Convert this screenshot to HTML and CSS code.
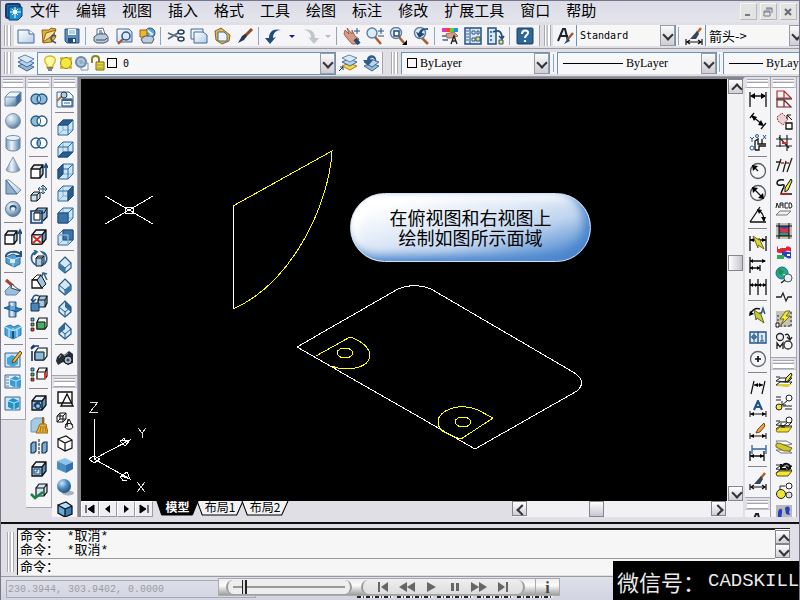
FILE: index.html
```html
<!DOCTYPE html>
<html lang="zh-CN">
<head>
<meta charset="utf-8">
<title>CAD</title>
<link rel="stylesheet" href="styles.css">
</head>
<body>
<svg class="sprite" aria-hidden="true">
  <defs>
    <linearGradient id="gb" x1="0" y1="0" x2="1" y2="1"><stop offset="0" stop-color="#f1f7fc"/><stop offset=".5" stop-color="#a9c6de"/><stop offset="1" stop-color="#486f98"/></linearGradient>
    <linearGradient id="gp" x1="0" y1="0" x2="1" y2="1"><stop offset="0" stop-color="#fff"/><stop offset="1" stop-color="#b3cde4"/></linearGradient>
    <linearGradient id="gh"><stop offset="0" stop-color="#7199bd"/><stop offset=".4" stop-color="#eef6fc"/><stop offset="1" stop-color="#557ea6"/></linearGradient>
    <radialGradient id="gs" cx=".35" cy=".3" r=".75"><stop offset="0" stop-color="#f2f8fd"/><stop offset=".5" stop-color="#a7c2d8"/><stop offset="1" stop-color="#4f7398"/></radialGradient>
    <radialGradient id="gd" cx=".35" cy=".3" r=".75"><stop offset="0" stop-color="#cfe6f8"/><stop offset=".5" stop-color="#4f8cc0"/><stop offset="1" stop-color="#1d4b7c"/></radialGradient>
  </defs>
  <symbol id="app" viewBox="0 0 18 18"><rect x="1" y="1" width="14" height="14" rx="2" fill="#0d6fbc" stroke="#1f3864" stroke-width="2"/><path d="M4 4h13v9l-4 4H4z" fill="#1592d8" stroke="#16365c"/><path d="M10 4v11M5 9h11M7 6l6 6M13 6l-6 6" stroke="#fff" stroke-width="1"/><rect x="8" y="7" width="4" height="4" fill="#fff"/></symbol>
  <symbol id="new" viewBox="0 0 18 18"><path d="M1 3h11l5 4v9H1z" fill="url(#gp)" stroke="#41699a"/><path d="M12 3v4h5" fill="#fff" stroke="#41699a"/></symbol>
  <symbol id="open" viewBox="0 0 18 18"><path d="M2 3h7l2-2 5 1-2 5 2 3-4 5-9 1z" fill="#e2b13a" stroke="#8d6719"/><path d="M3 15L6 6l10-3-4 6z" fill="#f8e29a" stroke="#8d6719"/><path d="M16 9c-4-2-6 1-4 5l4 2" fill="none" stroke="#3d526e" stroke-width="1.6"/></symbol>
  <symbol id="save" viewBox="0 0 18 18"><path d="M2 2h14v14H4l-2-2z" fill="#5c8dbd" stroke="#2e5787"/><path d="M5 2h8v6H5z" fill="#eef6fc"/><path d="M6 4h6M6 6h6" stroke="#7caace"/><path d="M5 11h8v5H5z" fill="#24486f"/><path d="M10 12h2v3h-2z" fill="#fff"/></symbol>
  <symbol id="print" viewBox="0 0 18 18"><path d="M5 8V2l6-1 2 6" fill="#fff" stroke="#5b6f88"/><path d="M2 10l4-3h8l2 3v4l-4 2H5l-3-2z" fill="#bac8d7" stroke="#445a76"/><path d="M4 13h9l2-2M7 4h3M7 6h4" stroke="#3c506b" fill="none"/></symbol>
  <symbol id="preview" viewBox="0 0 18 18"><path d="M2 2h12l3 3v10H2z" fill="url(#gp)" stroke="#41699a"/><path d="M9 11l-6 6" stroke="#ad4b26" stroke-width="2"/><circle cx="11" cy="9" r="4" fill="#d5ebf9" stroke="#34567d" stroke-width="1.5"/></symbol>
  <symbol id="publish" viewBox="0 0 18 18"><circle cx="12" cy="6" r="5" fill="#5ba4d6" stroke="#2c567f"/><path d="M9 3l5 4-3 3" stroke="#def0f9" fill="none" stroke-width="2"/><path d="M2 3h7v7H2z" fill="#f0b62a" stroke="#946211"/><path d="M3 12l4-3h7l2 3-2 4H5z" fill="#bfcbda" stroke="#455a75"/></symbol>
  <symbol id="cut" viewBox="0 0 18 18"><path d="M1 6l10 4M1 12l10-6" stroke="#53667c" stroke-width="1.7"/><ellipse cx="14" cy="5" rx="3" ry="2" fill="none" stroke="#223e60" stroke-width="1.5"/><ellipse cx="14" cy="12" rx="3" ry="2" fill="none" stroke="#223e60" stroke-width="1.5"/></symbol>
  <symbol id="copy" viewBox="0 0 18 18"><path d="M1 2h12v10H1z" fill="#edf5fb" stroke="#41699a"/><path d="M4 5h9l4 3v8H4z" fill="url(#gp)" stroke="#41699a"/></symbol>
  <symbol id="paste" viewBox="0 0 18 18"><path d="M2 4l6-3 9 7-1 6-7 3-6-4z" fill="#e3b64e" stroke="#86621c"/><path d="M5 5h6l3 3v6H5z" fill="#edf5fb" stroke="#41699a"/></symbol>
  <symbol id="brush" viewBox="0 0 18 18"><path d="M16 2l-7 7" stroke="#8c4c24" stroke-width="3"/><path d="M9 7l2 2-3 4-6 3 4-7z" fill="#29384c"/></symbol>
  <symbol id="undo" viewBox="0 0 18 18"><path d="M4 11C4 4 9 1 16 3c-5 0-8 3-8 8l3-1-6 7-5-6z" fill="#204b7c"/></symbol>
  <symbol id="redo" viewBox="0 0 18 18"><path d="M14 11C14 4 9 1 2 3c5 0 8 3 8 8l-3-1 6 7 5-6z" fill="#c1c6ca"/></symbol>
  <symbol id="pan" viewBox="0 0 18 18"><path d="M2 3l4 4-2-6 5 6V3l3 6 4 3-3 5H9L3 10 1 7z" fill="#d99a83" stroke="#844e42" stroke-width=".8"/><path d="M12 12l4 5" stroke="#214a78" stroke-width="4"/><path d="M14 1v6M11 4h6" stroke="#28507f"/></symbol>
  <symbol id="zoomrt" viewBox="0 0 18 18"><path d="M9 10l6 7" stroke="#ad5a2d" stroke-width="2.5"/><circle cx="6" cy="6" r="5" fill="#d9edf8" stroke="#617e9c" stroke-width="1.4"/><path d="M15 1v6M12 4h6M12 9h6" stroke="#28507f"/></symbol>
  <symbol id="zoomwin" viewBox="0 0 18 18"><path d="M10 10l5 6" stroke="#ad5a2d" stroke-width="2.5"/><circle cx="7" cy="6" r="5.5" fill="#d9edf8" stroke="#617e9c" stroke-width="1.4"/><path d="M5 4h5v5H5z" fill="#fff" stroke="#234971" stroke-width="1.5"/><path d="M18 13v5h-5z"/></symbol>
  <symbol id="zoomprev" viewBox="0 0 18 18"><path d="M9 10l7 7" stroke="#ad5a2d" stroke-width="2.5"/><circle cx="8" cy="6" r="5.5" fill="#d9edf8" stroke="#617e9c" stroke-width="1.4"/><path d="M16 1C9 1 7 4 7 6L4 5l3 6 6-4-3-1c0-2 2-4 6-3z" fill="#214b7a"/></symbol>
  <symbol id="props" viewBox="0 0 18 18"><path d="M1 1h4v4H1z" fill="#ed2ec7"/><path d="M5 1h4v4H5z" fill="#f54527"/><path d="M9 1h4v4H9z" fill="#49dc3a"/><path d="M13 1h4v4h-4z" fill="#278be9"/><path d="M5 7l8-2 4 4-6 2-5 0z" fill="#df9d83" stroke="#7a4638" stroke-width=".7"/><path d="M1 8h5v2H1zM1 12h6v2H2z" fill="#70889b"/><path d="M10 17l3-8 3 8M11 14h4" stroke="#222" fill="none" stroke-width="1.4"/></symbol>
  <symbol id="dc" viewBox="0 0 18 18"><path d="M1 1h16v16H1z" fill="#d7e8f5" stroke="#245080" stroke-width="1.5"/><path d="M6 1v16" stroke="#245080"/><path d="M2 4h3M2 7h3M2 10h3M2 13h3" stroke="#3c6a98"/><path d="M8 4h3v3H8zM13 4h2v3h-2zM8 11h3v3H8z" fill="#fff" stroke="#245080"/><path d="M12 10h4v4h-4z" fill="#f2df54" stroke="#245080"/></symbol>
  <symbol id="tp" viewBox="0 0 18 18"><path d="M1 1h8v16H1z" fill="#d7e8f5" stroke="#245080" stroke-width="1.5"/><path d="M3 4h2v2H3zM3 8h2v2H3zM3 12h2v2H3z" fill="#4b7aa6"/><path d="M6 5c7-3 9 1 9 6M12 9l3 3 2-3" fill="none" stroke="#245080" stroke-width="1.7"/><path d="M12 13h4v4h-4z" fill="#f2df54" stroke="#245080"/></symbol>
  <symbol id="help" viewBox="0 0 18 18"><rect x="1" y="1" width="16" height="16" rx="1" fill="#2d6899" stroke="#173b63"/><path d="M6 7c0-5 7-4 6-1 0 2-3 2-3 5M9 13v2" fill="none" stroke="#fff" stroke-width="2"/></symbol>
  <symbol id="tstyle" viewBox="0 0 18 18"><path d="M2 14L7 2h2l3 12M4 9h8" fill="none" stroke="#192330" stroke-width="2"/><path d="M17 6l-6 7" stroke="#9b6035" stroke-width="2.5"/><path d="M12 11l-4 6 6-3z" fill="#204b7c"/></symbol>
  <symbol id="dstyle" viewBox="0 0 18 18"><path d="M1 12v6M17 12v6M2 15h14M5 13l-3 2 3 2M13 13l3 2-3 2" fill="none" stroke="#111" stroke-width="1.2"/><path d="M16 1l-4 5" stroke="#a86530" stroke-width="2.5"/><path d="M12 4L5 12h6l3-5z" fill="#344659"/></symbol>
  <symbol id="layers" viewBox="0 0 18 18"><path d="M1 12l7-3 9 4-7 4z" fill="#92b8d7" stroke="#3f6995"/><path d="M1 8l7-3 9 4-7 4z" fill="#b9d4e9" stroke="#3f6995"/><path d="M1 4l7-3 9 4-7 4z" fill="#d9e9f5" stroke="#5f87ad"/></symbol>
  <symbol id="laycur" viewBox="0 0 18 18"><path d="M3 12l7-3 8 3-7 4z" fill="#f4d742" stroke="#a98216"/><path d="M3 8l7-3 8 3-7 4z" fill="#b9d4e9" stroke="#3f6995"/><path d="M3 4l7-3 8 3-7 4z" fill="#d9e9f5" stroke="#5f87ad"/><path d="M0 17l4-4M1 13h3v3" stroke="#1c3c63" fill="none"/></symbol>
  <symbol id="layprev" viewBox="0 0 18 18"><path d="M2 12l7-3 8 3-7 5z" fill="#92b8d7" stroke="#3f6995"/><path d="M2 8l7-3 8 3-7 5z" fill="#b9d4e9" stroke="#3f6995"/><path d="M14 8c2-8-9-9-9-2H1l5 6 5-6H8c0-4 5-2 6 2z" fill="#2c5b8c"/></symbol>
  <symbol id="bulb" viewBox="0 0 14 16"><path d="M4 10C-1 4 3 1 7 1s8 3 3 9v2H4z" fill="#fff9a3" stroke="#d8bd25" stroke-width="1.4"/><path d="M4 13h6M5 15h4" stroke="#54616d" stroke-width="1.5"/></symbol>
  <symbol id="sun" viewBox="0 0 14 16"><path d="M1 2h3v3H1zM10 2h3v3h-3zM1 11h3v3H1zM10 11h3v3h-3z" fill="#e8bb24"/><circle cx="7" cy="8" r="5.5" fill="#f7e73d" stroke="#8e8130"/></symbol>
  <symbol id="vpsun" viewBox="0 0 14 16"><circle cx="6" cy="7" r="5" fill="#b4c7d6" stroke="#688cab" stroke-width="2"/><circle cx="6" cy="7" r="2" fill="#95acbf"/><path d="M8 8h5v7H6v-3" fill="none" stroke="#7f9bb6"/></symbol>
  <symbol id="lock" viewBox="0 0 14 16"><path d="M1 8V4c0-4 7-4 7 0v4" fill="none" stroke="#8e8126" stroke-width="2"/><path d="M5 7h8v8H5z" fill="#e9d93b" stroke="#786d1b"/><path d="M6 10h6M6 13h6" stroke="#9f902a"/></symbol>

  <symbol id="box" viewBox="0 0 18 18"><path d="M1 7l5-5h11l-5 5z" fill="#edf5fb"/><path d="M1 7h11v9H1z" fill="url(#gb)"/><path d="M12 7l5-5v9l-5 5z" fill="#446c98"/><path d="M1 7l5-5h11v9l-5 5H1zh11v9M12 7l5-5" fill="none" stroke="#6d89a5"/></symbol>
  <symbol id="sphere" viewBox="0 0 18 18"><circle cx="9" cy="9" r="7.5" fill="url(#gs)" stroke="#8298ad"/></symbol>
  <symbol id="cyl" viewBox="0 0 18 18"><path d="M2 4v10c2 4 12 4 14 0V4z" fill="url(#gh)" stroke="#66839f"/><ellipse cx="9" cy="4" rx="7" ry="2.5" fill="#e6f1f9" stroke="#7892ab"/></symbol>
  <symbol id="cone" viewBox="0 0 18 18"><path d="M9 1L2 14c2 3 12 3 14 0z" fill="url(#gh)" stroke="#8798aa"/></symbol>
  <symbol id="wedge" viewBox="0 0 18 18"><path d="M2 2h3l12 10-4 4z" fill="url(#gp)" stroke="#7891aa"/><path d="M2 2v14h11z" fill="#8fb0cd" stroke="#486d93"/></symbol>
  <symbol id="torus" viewBox="0 0 18 18"><circle cx="9" cy="9" r="7.5" fill="url(#gs)" stroke="#637c96"/><ellipse cx="9" cy="8" rx="3.5" ry="3" fill="#294e78"/><ellipse cx="9" cy="9" rx="2.5" ry="2" fill="#e3ebf2"/></symbol>
  <symbol id="extrude" viewBox="0 0 18 18"><path d="M1 7h9v9H1z" fill="#fff"/><path d="M1 7l3-4h9l-3 4z" fill="#dcecf7"/><path d="M10 7l3-4v9l-3 4z" fill="#9fc5e0"/><path d="M1 7l3-4h9v9l-3 4H1V7h9v9M10 7l3-4" fill="none" stroke="#111" stroke-width="1.3"/><path d="M16 16V3M14 6l2-4 2 4" fill="none" stroke="#204d7e" stroke-width="1.6"/></symbol>
  <symbol id="revolve" viewBox="0 0 18 18"><path d="M2 7l7-3 7 3v7l-6 3-8-4z" fill="#549ed5" stroke="#2b6399"/><path d="M2 7l7 3 7-3M9 10v7" stroke="#b9e2f5" fill="none"/><path d="M2 7C1 1 14 0 17 5M17 1v5h-5" fill="none" stroke="#29527c" stroke-width="2"/><path d="M6 9h5v4H6z" fill="#d8edf7"/></symbol>
  <symbol id="slice" viewBox="0 0 18 18"><path d="M1 13l5-5 11 4-5 5H2z" fill="#9ac0dd" stroke="#6684a1"/><path d="M2 2l7 6" stroke="#a3442f" stroke-width="3"/><path d="M8 6l8 7-9-3z" fill="#eef1f4" stroke="#3d4650"/></symbol>
  <symbol id="section" viewBox="0 0 18 18"><path d="M5 2h7v15H5z" fill="url(#gh)" stroke="#335f8b"/><path d="M0 8l6-2 12 3-5 3z" fill="#2879c0" stroke="#18558d"/><path d="M6 6h5v4H6z" fill="#68a8d9"/></symbol>
  <symbol id="interf" viewBox="0 0 18 18"><path d="M1 5l5-2 4 2 4-2 3 2v8l-8 4-8-4z" fill="#4aa3df" stroke="#2c78b0"/><path d="M5 7v8M9 6v10M13 7v8M1 5l8 4 8-4" stroke="#b9e3f7" fill="none" stroke-width="1.3"/><path d="M9 9v7" stroke="#174f87" stroke-width="2"/></symbol>
  <symbol id="sketchedit" viewBox="0 0 18 18"><path d="M1 3h15v14H1z" fill="#c9e3f4" stroke="#376994"/><path d="M3 8l5-3 6 3v6l-5 3-6-3z" fill="#45a5d5"/><path d="M16 1l-7 9-1 3 3-1 7-9z" fill="#ecb945" stroke="#6b4718"/></symbol>
  <symbol id="setup" viewBox="0 0 18 18"><path d="M1 3h15v13H1z" fill="#e1eff8" stroke="#376994"/><path d="M2 5h3M2 8h3M2 11h3M2 14h3" stroke="#5683ab"/><path d="M6 7l5-3 6 3v7l-5 2-6-3z" fill="#3e9bd1"/><path d="M6 7l6 2 5-2M12 9v7" stroke="#ade4f6" fill="none"/></symbol>
  <symbol id="setprof" viewBox="0 0 18 18"><path d="M1 3h15v13H1z" fill="#c9e3f4" stroke="#376994"/><path d="M4 7l5-3 6 3v6l-5 3-6-3z" fill="#2592c5"/><path d="M4 7l6 2 5-2M10 9v7" stroke="#ade4f6" fill="none"/></symbol>

  <symbol id="union" viewBox="0 0 18 18"><g fill="#8dbdd8" stroke="#265b87" stroke-width="1.3"><circle cx="6" cy="9" r="5"/><circle cx="12" cy="9" r="5"/></g><path d="M9 5c-2 2-2 6 0 8 2-2 2-6 0-8" fill="#b5dceb" stroke="#265b87"/></symbol>
  <symbol id="subtract" viewBox="0 0 18 18"><circle cx="6" cy="9" r="5" fill="#8dbdd8" stroke="#265b87" stroke-width="1.3"/><circle cx="12" cy="9" r="5" fill="#fff" stroke="#265b87" stroke-width="1.3"/><path d="M9 5c2 2 2 6 0 8" stroke="#265b87" fill="none"/></symbol>
  <symbol id="intersect" viewBox="0 0 18 18"><g fill="#fff" stroke="#265b87" stroke-width="1.3"><circle cx="6" cy="9" r="5"/><circle cx="12" cy="9" r="5"/></g><path d="M9 5c-2 2-2 6 0 8 2-2 2-6 0-8" fill="#8dbdd8" stroke="#265b87"/></symbol>
  <symbol id="moveface" viewBox="0 0 18 18"><path d="M1 11l3-3h6v6l-3 3H1z" fill="#c9e4f5" stroke="#111"/><path d="M1 11h6v6M7 11l3-3" stroke="#111" fill="none"/><path d="M13 1v9M8 5h9M11 3l2-2 2 2M11 8l2 2 2-2M10 3L8 5l2 2M15 3l2 2-2 2" stroke="#245080" fill="none"/></symbol>
  <symbol id="cblue" viewBox="0 0 18 18"><path d="M2 7h10v9H2z" fill="#9cc9ea"/><path d="M2 7l4-5h10l-4 5z" fill="#e4f2fb"/><path d="M12 7l4-5v9l-4 5z" fill="#5b92c1"/><path d="M2 7l4-5h10v9l-4 5H2V7h10v9M12 7l4-5" fill="none" stroke="#111" stroke-width="1.3"/></symbol>
  <symbol id="offset" viewBox="0 0 18 18"><path d="M5 5l3-3h9v9l-4 4" fill="#82b4da" stroke="#111" stroke-width="1.2"/><path d="M1 5h11v12H1z" fill="#cfe4f3" stroke="#173d6a" stroke-width="1.6"/><path d="M4 7h10l3-5" fill="none" stroke="#111"/><path d="M4 7h6v7H4z" fill="#fff" stroke="#111"/></symbol>
  <symbol id="delface" viewBox="0 0 18 18"><use href="#cblue"/><path d="M2 7h10v9H2z" fill="#fff" stroke="#111"/><path d="M3 8l8 7M11 8l-8 7" stroke="#d42a23" stroke-width="2"/></symbol>
  <symbol id="rotface" viewBox="0 0 18 18"><path d="M6 8l2-2h6v7l-2 3H6z" fill="#a9d0ea" stroke="#111"/><path d="M6 8h6v8M12 8l2-2" stroke="#111" fill="none"/><path d="M6 15C-1 11 1 3 6 2M4 0l3 2-3 3M13 15c6-4 4-12-1-13l3 3" fill="none" stroke="#2b5f8c" stroke-width="1.7"/></symbol>
  <symbol id="taper" viewBox="0 0 18 18"><path d="M2 8l5-5h4l-3 5z" fill="#fff" stroke="#111"/><path d="M2 8h5l5 8H2z" fill="#fff" stroke="#111" stroke-width="1.3"/><path d="M7 8l4-5 5 9-4 4z" fill="#9dc5df" stroke="#111"/><path d="M17 8l-3-6M12 4l1-3 4 1" fill="none" stroke="#2b5f8c" stroke-width="1.5"/></symbol>
  <symbol id="copyface" viewBox="0 0 18 18"><path d="M8 6l2-4h7v7l-2 4H8z" fill="#a3cae8" stroke="#111" stroke-width="1.2"/><path d="M8 6h7v7M15 6l2-4" fill="none" stroke="#111"/><path d="M1 9h8v8H1z" fill="#4985b8" stroke="#12345d"/><path d="M9 2C4 0 2 3 3 7M1 5l2 3 3-3" fill="none" stroke="#235082" stroke-width="1.5"/></symbol>
  <symbol id="colorface" viewBox="0 0 18 18"><path d="M7 6l2-4h8v8l-2 3H7z" fill="#e9f3f8" stroke="#111" stroke-width="1.2"/><path d="M7 6h8v7H7z" fill="#48af64" stroke="#111"/><path d="M1 2h3v3H1z" fill="#55b3d9" stroke="#111" stroke-width=".7"/><path d="M1 7h3v3H1z" fill="#48af64" stroke="#111" stroke-width=".7"/><path d="M1 12h3v3H1z" fill="#e33e2d" stroke="#111" stroke-width=".7"/></symbol>
  <symbol id="copyedge" viewBox="0 0 18 18"><path d="M5 8l3-4h9v8l-3 4H5z" fill="#e9f3f8" stroke="#111" stroke-width="1.2"/><path d="M5 8h9v8H5z" fill="#8ab8da" stroke="#111"/><path d="M2 7v10M9 2H5L1 5M4 1L1 4" fill="none" stroke="#173d6a" stroke-width="1.7"/></symbol>
  <symbol id="coloredge" viewBox="0 0 18 18"><path d="M7 6l2-4h8v8l-2 3H7V6h8v7M15 6l2-4" fill="#fff" stroke="#111" stroke-width="1.2"/><path d="M15 6v7" stroke="#e23127" stroke-width="2"/><path d="M1 2h3v3H1z" fill="#55b3d9" stroke="#111" stroke-width=".7"/><path d="M1 7h3v3H1z" fill="#48af64" stroke="#111" stroke-width=".7"/><path d="M1 12h3v3H1z" fill="#e33e2d" stroke="#111" stroke-width=".7"/></symbol>
  <symbol id="imprint" viewBox="0 0 18 18"><use href="#cblue"/><circle cx="8" cy="12" r="2.5" fill="none" stroke="#173d6a" stroke-width="1.3"/><path d="M4 13c0-3 2-5 6-5" fill="none" stroke="#173d6a" stroke-width="1.3"/></symbol>
  <symbol id="clean" viewBox="0 0 18 18"><path d="M1 5l4-3h9v10l-4 4H1z" fill="#a5cae3" stroke="#7596b1"/><path d="M13 1v7" stroke="#9d641f" stroke-width="2"/><path d="M10 8h6l2 9H6z" fill="#e9b22f" stroke="#9c6b18"/><path d="M11 10l-1 6M13 10v6M15 10l1 6" stroke="#a77216"/></symbol>
  <symbol id="separate" viewBox="0 0 18 18"><path d="M1 6l2-2h3v9l-2 2H1zM12 6l2-2h3v9l-2 2h-3z" fill="#78add5" stroke="#123354" stroke-width="1.2"/><path d="M9 1v16" stroke="#111" stroke-dasharray="3 1"/></symbol>
  <symbol id="shell" viewBox="0 0 18 18"><use href="#cblue"/><path d="M4 9h6v5H4z" fill="#d7e9f5" stroke="#28557f"/><path d="M7 9v3H4" stroke="#28557f" fill="none"/></symbol>
  <symbol id="check" viewBox="0 0 18 18"><path d="M6 6l3-4h8v8l-3 4H6V6h8v8M14 6l3-4" fill="#cfe5f4" stroke="#111" stroke-width="1.2"/><path d="M1 12l4 4 8-6" fill="none" stroke="#168342" stroke-width="2.5"/></symbol>

  <symbol id="namedview" viewBox="0 0 18 18"><path d="M1 2h12l4 4v11H1z" fill="#edf5fa" stroke="#376994"/><path d="M1 11l5-5" stroke="#ad7640" stroke-width="2"/><circle cx="8" cy="5" r="3" fill="#b7cbd9" stroke="#2b3947"/><path d="M6 9h10v7H6z" fill="#fff" stroke="#173d6a"/><path d="M6 9h10v2H6z" fill="#28659d"/><path d="M8 13h6" stroke="#28659d"/></symbol>
  <symbol id="wire" viewBox="0 0 18 18"><path d="M2 7l5-5h10v10l-5 5H2z" fill="#cbe5f6"/><path d="M2 17l5-5h10M7 2v10" fill="none" stroke="#7fb0d6"/><path d="M2 7l5-5h10v10l-5 5H2V7h10v10M12 7l5-5" fill="none" stroke="#2f669a"/></symbol>
  <symbol id="vtop" viewBox="0 0 18 18"><use href="#wire"/><path d="M2 7l5-5h10l-5 5z" fill="#2b5d8c" stroke="#1f4c78"/></symbol>
  <symbol id="vbot" viewBox="0 0 18 18"><use href="#wire"/><path d="M2 17l5-5h10l-5 5z" fill="#2b5d8c" stroke="#1f4c78"/></symbol>
  <symbol id="vleft" viewBox="0 0 18 18"><use href="#wire"/><path d="M2 7l5-5v10l-5 5z" fill="#2b5d8c" stroke="#1f4c78"/></symbol>
  <symbol id="vright" viewBox="0 0 18 18"><use href="#wire"/><path d="M12 7l5-5v10l-5 5z" fill="#2b5d8c" stroke="#1f4c78"/></symbol>
  <symbol id="vfront" viewBox="0 0 18 18"><use href="#wire"/><path d="M2 7h10v10H2z" fill="#3d74a7" stroke="#1f4c78"/></symbol>
  <symbol id="vback" viewBox="0 0 18 18"><use href="#wire"/><path d="M7 2h10v10H7z" fill="#3d74a7" stroke="#1f4c78"/><path d="M2 7h10v10" fill="none" stroke="#a9cee9"/></symbol>
  <symbol id="iso" viewBox="0 0 18 18"><path d="M9 1l6 6v5l-6 5-6-5V7z" fill="#d3e9f7" stroke="#275885" stroke-width="1.2"/><path d="M3 7l6 5 6-5M9 12v5" fill="none" stroke="#275885"/></symbol>
  <symbol id="isw" viewBox="0 0 18 18"><use href="#iso"/><path d="M3 7l6 5v5l-6-5z" fill="#3e77a9"/></symbol>
  <symbol id="ise" viewBox="0 0 18 18"><use href="#iso"/><path d="M15 7l-6 5v5l6-5z" fill="#3e77a9"/></symbol>
  <symbol id="ine" viewBox="0 0 18 18"><use href="#iso"/><path d="M9 1l6 6v5L9 7z" fill="#356693"/></symbol>
  <symbol id="inw" viewBox="0 0 18 18"><use href="#iso"/><path d="M9 1L3 7v5l6-5z" fill="#356693"/></symbol>
  <symbol id="camera" viewBox="0 0 18 18"><path d="M1 7l4-4 3 2 5-4 4 3v9l-5 2-5-3-5 3-2-4z" fill="#242c34"/><circle cx="12" cy="10" r="4" fill="#a6b9c8" stroke="#111"/><circle cx="12" cy="10" r="1.5" fill="#294c6d"/><path d="M3 8l2-3M8 6l4-3" stroke="#9caab5"/></symbol>
  <symbol id="s2d" viewBox="0 0 18 18"><path d="M2 2h14v11H2z" fill="#fff" stroke="#111" stroke-width="1.4"/><path d="M11 4l6 12H5z" fill="none" stroke="#111" stroke-width="1.4"/></symbol>
  <symbol id="s3d" viewBox="0 0 18 18"><path d="M1 4l3-3h6v6l-3 3H1V4h6v6M7 4l3-3M1 10l3-3h6M4 1v6" fill="none" stroke="#111"/><path d="M13 7l4 8c-1 3-7 3-8 0zM12 7l-1 8M9 13c2-2 6-2 8 0" fill="none" stroke="#111"/></symbol>
  <symbol id="shid" viewBox="0 0 18 18"><path d="M2 5l8-3 6 4v8l-7 3-7-4V5l7 4 7-3M9 9v8" fill="#fff" stroke="#111" stroke-width="1.2"/></symbol>
  <symbol id="sflat" viewBox="0 0 18 18"><path d="M1 5l8-3 8 4-7 3z" fill="#8fc4ea"/><path d="M1 5l9 4v8l-9-4z" fill="#4b8dc3"/><path d="M17 6l-7 3v8l7-4z" fill="#356fa7"/></symbol>
  <symbol id="sgou" viewBox="0 0 18 18"><ellipse cx="12" cy="15" rx="6" ry="2.5" fill="#aab3bc"/><circle cx="8" cy="8" r="7" fill="url(#gd)"/></symbol>
  <symbol id="sedge" viewBox="0 0 18 18"><path d="M2 5l8-3 6 4-7 3z" fill="#b2ddf7"/><path d="M2 5l7 4v8l-7-4z" fill="#62aadf"/><path d="M16 6L9 9v8l7-3z" fill="#397eb9"/><path d="M2 5l8-3 6 4v8l-7 3-7-4V5l7 4 7-3M9 9v8" fill="none" stroke="#111" stroke-width="1.3"/></symbol>

  <symbol id="dlin" viewBox="0 0 18 18"><path d="M1 2v15M17 2v15M2 6h14" stroke="#111" stroke-width="1.3"/><path d="M1 6l5-3v6zM17 6l-5-3v6z"/></symbol>
  <symbol id="dali" viewBox="0 0 18 18"><path d="M5 1L1 6M17 11l-5 6M3 4l11 9" stroke="#111" stroke-width="1.3"/><path d="M2 3l6 2-3 4zM15 14l-6-1 3-5z"/></symbol>
  <symbol id="dord" viewBox="0 0 18 18"><path d="M6 16V7l3-2v5h8M6 16h4v-4h7M13 5v5" fill="none" stroke="#111" stroke-width="1.3"/><path d="M1 3l2 2 2-2M3 5v3M14 1l3 4M17 1l-3 4" stroke="#1d5b98" fill="none"/><circle cx="3" cy="14" r="2" fill="none" stroke="#1d5b98"/><circle cx="8" cy="2" r="1.5" fill="none" stroke="#1d5b98"/></symbol>
  <symbol id="drad" viewBox="0 0 18 18"><circle cx="9" cy="9" r="7.5" fill="none" stroke="#5a5f65" stroke-width="1.3"/><path d="M4 4l5 5" stroke="#111" stroke-width="1.3"/><path d="M3 3l6 1-5 5z"/></symbol>
  <symbol id="ddia" viewBox="0 0 18 18"><circle cx="9" cy="9" r="7.5" fill="none" stroke="#5a5f65" stroke-width="1.3"/><path d="M4 4l10 10" stroke="#111" stroke-width="1.3"/><path d="M3 3l6 1-5 5zM15 15l-6-1 5-5z"/></symbol>
  <symbol id="dang" viewBox="0 0 18 18"><path d="M1 16h16M1 16L11 1M9 4c4 2 6 6 6 11" stroke="#111" fill="none" stroke-width="1.3"/><path d="M8 3l5 1-3 4zM15 16l-3-5h5z"/></symbol>
  <symbol id="dquick" viewBox="0 0 18 18"><path d="M1 2v15M17 2v15M1 6h16" stroke="#111" stroke-width="1.3"/><path d="M1 6l4-2v4zM17 6l-4-2v4z"/><path d="M4 2l6 4 0-2 5 11-6-4v3z" fill="#dcd632" stroke="#6d681d"/></symbol>
  <symbol id="dbase" viewBox="0 0 18 18"><path d="M1 1v16M1 5h15M1 12h10M11 9v6" stroke="#111" stroke-width="1.3"/><path d="M17 5l-4-2v4zM1 5l3-2v4zM11 12l-3-2v4zM1 12l3-2v4z"/></symbol>
  <symbol id="dcont" viewBox="0 0 18 18"><path d="M1 1v16M9 1v16M17 1v16M1 7h16" stroke="#111" stroke-width="1.3"/><path d="M1 7l3-2v4zM9 7L6 5v4zM9 7l3-2v4zM17 7l-3-2v4z"/></symbol>
  <symbol id="dlead" viewBox="0 0 18 18"><path d="M1 8c3-5 7-6 10-5" fill="none" stroke="#111" stroke-width="1.5"/><path d="M0 10l1-5 4 3z"/><path d="M12 8l2-6 2 6M13 6h3" fill="none" stroke="#214f80" stroke-width="1.2"/><path d="M5 4l6 4v-2l4 11-7-5-1 2z" fill="#c9ca3b" stroke="#5c6720"/></symbol>
  <symbol id="dtol" viewBox="0 0 18 18"><path d="M1 4h16v11H1zM9 4v11" fill="#d9eaf6" stroke="#245586" stroke-width="1.4"/><circle cx="5" cy="9" r="2" fill="none" stroke="#245586"/><path d="M5 5v9M2 9h6M13 7v6M12 8h1M11 13h4" stroke="#245586"/></symbol>
  <symbol id="dcen" viewBox="0 0 18 18"><circle cx="9" cy="9" r="7.5" fill="none" stroke="#656a70" stroke-width="1.3"/><path d="M9 6v6M6 9h6" stroke="#111" stroke-width="1.7"/></symbol>
  <symbol id="dedit" viewBox="0 0 18 18"><path d="M5 3L2 16M16 3l-3 13M5 7h9" stroke="#111" stroke-width="1.2"/><path d="M5 7l4-2v4zM14 7l-4-2v4z"/></symbol>
  <symbol id="dtext" viewBox="0 0 18 18"><path d="M5 10L9 1l4 9M6 7h6" stroke="#245586" stroke-width="2.2" fill="none"/><path d="M1 11v6M17 11v6M1 14h16" stroke="#111"/><path d="M1 14l4-2v4zM17 14l-4-2v4z"/></symbol>
  <symbol id="dpen" viewBox="0 0 18 18"><path d="M15 1l-6 6-2 4 4-1 5-6z" fill="#e5a644" stroke="#764820"/><path d="M1 11v6M17 11v6M1 14h16" stroke="#111"/><path d="M1 14l4-2v4zM17 14l-4-2v4z"/></symbol>
  <symbol id="dupd" viewBox="0 0 18 18"><path d="M3 1v9M17 1v9M3 5h14" stroke="#2b649a" stroke-width="1.3"/><path d="M1 7v10M15 7v10M1 12h14" stroke="#111" stroke-width="1.3"/><path d="M1 12l4-2v4zM15 12l-4-2v4z"/></symbol>

  <symbol id="rmir" viewBox="0 0 18 18"><path d="M2 1h7v7H2zM9 1l7 7H9" fill="none" stroke="#b82f34" stroke-width="1.2"/><path d="M2 10h7v7H2zM9 10l7 7H9" fill="none" stroke="#7a2024" stroke-width="1.2"/><path d="M1 9h16" stroke="#111"/></symbol>
  <symbol id="rrot" viewBox="0 0 18 18"><path d="M2 5l5-4 6 6-5 6-5-4z" fill="#e8d4d5" stroke="#ad3034" stroke-dasharray="2 1"/><path d="M11 11h6v6h-6z" fill="#fff" stroke="#111" stroke-width="1.3"/><path d="M17 8l-5-5M12 7V3h4" stroke="#111" fill="none"/></symbol>
  <symbol id="rtrim" viewBox="0 0 18 18"><path d="M1 5h16M5 1v12M1 12h16M4 3l10 11M12 1v16" stroke="#222" stroke-width="1.2" fill="none"/><path d="M7 9h5" stroke="#c92f35" stroke-width="2"/></symbol>
  <symbol id="rext" viewBox="0 0 18 18"><path d="M6 3L2 15M11 5L8 16M17 2l-5 14M1 6h5" stroke="#222" stroke-width="1.3"/><path d="M6 7h3M11 7h3" stroke="#b72a31" stroke-width="1.5"/></symbol>
  <symbol id="rpoly" viewBox="0 0 18 18"><path d="M9 2C0 0 0 9 7 7S1 18 9 16h8" fill="none" stroke="#111" stroke-width="1.5"/><path d="M16 1l-6 9v4l3-2 4-9z" fill="#f4ed36" stroke="#111"/><path d="M5 16h8" stroke="#cc2029" stroke-width="1.5"/></symbol>
  <symbol id="rabcd" viewBox="0 0 18 18"><path d="M1 8l1-5 2 5M5 8V3h3v5M5 5h3M13 3h-3v5h3M14 3v5h2l1-2-1-3z" fill="none" stroke="#222"/><path d="M5 11h11l-4 4H1z" fill="#f0f0f0" stroke="#777"/></symbol>
  <symbol id="rimg1" viewBox="0 0 18 18"><path d="M1 1h16v16H1z" fill="#c4c0b6"/><path d="M4 4h10v10H4z" fill="#334fad"/><path d="M5 5c7 5 7-2 9 2v4c-3-2-6 2-9-2z" fill="#dc3347"/><path d="M4 11h9v2H4z" fill="#33a14b"/><path d="M4 1v16M14 1v16M1 4h16M1 14h16" stroke="#111"/></symbol>
  <symbol id="rimg2" viewBox="0 0 18 18"><path d="M1 1h16v15H1z" fill="#eef"/><path d="M2 2c5 6 9-3 14 2v4C10 4 8 12 2 8z" fill="#df2534"/><path d="M7 8c4-2 6 1 9 0v6c-4 2-5-3-9-1z" fill="#283fc1"/><path d="M2 11h7v4H2z" fill="#31a653"/><path d="M3 4h2M8 3h3M12 11h3" stroke="#fff" stroke-width="2"/></symbol>
  <symbol id="rglobe" viewBox="0 0 18 18"><circle cx="7" cy="7" r="6" fill="#20a5a0" stroke="#1a6f72"/><path d="M4 3l5 2-3 4-3-2z" fill="#2a8f39"/><path d="M8 8l4 0-2 4z" fill="#d8ed42"/><circle cx="13" cy="12" r="4" fill="#e0f2f8" stroke="#555"/><path d="M10 14l-4 3" stroke="#222" stroke-width="1.5"/></symbol>
  <symbol id="rbreak" viewBox="0 0 18 18"><path d="M1 9h5l2-4 3 8 2-4h4" fill="none" stroke="#222" stroke-width="1.3"/></symbol>
  <symbol id="rsel" viewBox="0 0 18 18"><path d="M1 1h16v16H1z" fill="#c5c2b8"/><path d="M1 16h15M16 2v14M3 5v11" stroke="#222" stroke-dasharray="2 2"/><path d="M11 1L5 9h4l-3 6 9-9h-4l4-5z" fill="#f3ef34" stroke="#6e671c"/><path d="M1 13h3v4H1z" fill="#fff" stroke="#111"/></symbol>
  <symbol id="rmo" viewBox="0 0 18 18"><circle cx="5" cy="5" r="3.5" fill="none" stroke="#222" stroke-width="1.3"/><path d="M10 3c3-2 4 0 5 4M12 5l3 3 2-3M2 17v-6l3 4 3-4v6" fill="none" stroke="#222" stroke-width="1.3"/><circle cx="13" cy="13" r="4" fill="none" stroke="#333" stroke-width="1.3"/></symbol>
  <symbol id="ly" viewBox="0 0 18 18"><path d="M1 13l4-3h12l-4 4zM1 9l4-3h12l-4 4zM1 5h4" fill="#fff" stroke="#222"/></symbol>
  <symbol id="ly1" viewBox="0 0 18 18"><use href="#ly"/><path d="M1 14l4-2h12l-4 3z" fill="#dccd3b"/><path d="M16 1l-5 5-1 4 3-1 4-6z" fill="#f5ec35" stroke="#111"/></symbol>
  <symbol id="ly2" viewBox="0 0 18 18"><path d="M1 3h5M1 6h5M8 12h9M10 15h7" stroke="#222"/><circle cx="4" cy="13" r="3" fill="#f0e538" stroke="#222"/><circle cx="14" cy="4" r="3" fill="#fff" stroke="#222"/><path d="M12 7l-5 4M7 7v4h4" stroke="#222" fill="none"/></symbol>
  <symbol id="ly3" viewBox="0 0 18 18"><use href="#ly"/><path d="M1 14l4-3h12l-4 5H2z" fill="#eadc32" stroke="#777017"/><circle cx="14" cy="4" r="3" fill="#fff" stroke="#222"/><path d="M12 7l-5 4M6 7v4h4" stroke="#222" fill="none"/></symbol>
  <symbol id="ly4" viewBox="0 0 18 18"><path d="M1 3h10l6 3-4 1H4zM1 12h11l5 3H6z" fill="#fff" stroke="#777"/><path d="M1 6l3-1 13 5-2 3H9L1 9z" fill="#d2c72f" stroke="#716a19"/></symbol>
  <symbol id="ly5" viewBox="0 0 18 18"><use href="#ly"/><path d="M1 13l4-2h12l-4 5H2z" fill="#f2e834" stroke="#575017"/><path d="M7 7c2-5 9-4 8 2M15 9l-4-2M6 4v5h5" fill="none" stroke="#111" stroke-width="2"/></symbol>
  <symbol id="ly6" viewBox="0 0 18 18"><circle cx="6" cy="12" r="4.5" fill="#eee337" stroke="#222"/><circle cx="14" cy="4" r="3" fill="#fff" stroke="#222"/><circle cx="14" cy="13" r="3" fill="#ddd" stroke="#333"/><path d="M10 4H5v4" stroke="#222" fill="none"/></symbol>
  <symbol id="ly7" viewBox="0 0 18 18"><path d="M1 1h16v16H1z" fill="#b9b8ba"/><path d="M3 9c0-5 5-6 4-1l-1 8-3-1zM10 4c4-4 6 1 4 4l1 3-4-1z" fill="#253fc1"/></symbol>
  <symbol id="tri" viewBox="0 0 10 10"><path d="M2 4h6L5 7z"/></symbol>
</svg>

<header class="menubar">
  <svg class="appicon"><use href="#app"/></svg>
  <nav class="menus">
    <button>文件</button><button>编辑</button><button>视图</button><button>插入</button><button>格式</button><button>工具</button><button>绘图</button><button>标注</button><button>修改</button><button>扩展工具</button><button>窗口</button><button>帮助</button>
  </nav>
  <div class="winbtns">
    <button aria-label="最小化"><svg viewBox="0 0 14 14"><path d="M4 10h5" stroke="#777985" stroke-width="2"/></svg></button>
    <button aria-label="还原"><svg viewBox="0 0 14 14"><path d="M5 3h6v5M3 6h6v5H3zM5 4h6M3 7h6" fill="none" stroke="#777985"/></svg></button>
    <button aria-label="关闭"><svg viewBox="0 0 14 14"><path d="M4 4l6 6M10 4l-6 6" stroke="#686a74" stroke-width="2"/></svg></button>
  </div>
</header>

<div class="toolrow">
  <i class="grip"></i>
  <div class="panel std">
    <button aria-label="新建"><svg><use href="#new"/></svg></button><button aria-label="打开"><svg><use href="#open"/></svg></button><button aria-label="保存"><svg><use href="#save"/></svg></button><hr>
    <button aria-label="打印"><svg><use href="#print"/></svg></button><button aria-label="打印预览"><svg><use href="#preview"/></svg></button><button aria-label="发布"><svg><use href="#publish"/></svg></button><hr>
    <button aria-label="剪切"><svg><use href="#cut"/></svg></button><button aria-label="复制"><svg><use href="#copy"/></svg></button><button aria-label="粘贴"><svg><use href="#paste"/></svg></button><button aria-label="特性匹配"><svg><use href="#brush"/></svg></button><hr>
    <button aria-label="放弃"><svg><use href="#undo"/></svg></button><button class="drop" aria-label="放弃列表"><svg fill="#1414a0"><use href="#tri"/></svg></button><button aria-label="重做"><svg><use href="#redo"/></svg></button><button class="drop" aria-label="重做列表"><svg fill="#b9bcc2"><use href="#tri"/></svg></button><hr>
    <button aria-label="平移"><svg><use href="#pan"/></svg></button><button aria-label="实时缩放"><svg><use href="#zoomrt"/></svg></button><button aria-label="窗口缩放"><svg><use href="#zoomwin"/></svg></button><button aria-label="上一个"><svg><use href="#zoomprev"/></svg></button><hr>
    <button aria-label="特性"><svg><use href="#props"/></svg></button><button aria-label="设计中心"><svg><use href="#dc"/></svg></button><button aria-label="工具选项板"><svg><use href="#tp"/></svg></button><hr>
    <button aria-label="帮助"><svg><use href="#help"/></svg></button>
  </div>
  <i class="grip mid"></i>
  <div class="panel tail">
    <button aria-label="文字样式"><svg><use href="#tstyle"/></svg></button>
    <div class="combo c100"><select class="mono" aria-label="文字样式"><option>Standard</option></select><i class="arr"></i></div><hr>
    <button aria-label="标注样式"><svg><use href="#dstyle"/></svg></button>
    <div class="combo c100"><select class="cjk" aria-label="标注样式"><option>箭头-&gt;</option></select><i class="arr"></i></div>
  </div>
</div>

<div class="toolrow">
  <i class="grip"></i>
  <div class="panel layerbar">
    <button aria-label="图层"><svg><use href="#layers"/></svg></button>
    <div class="combo layer"><select class="mono" aria-label="当前图层"><option>0</option></select><span class="deco"><svg><use href="#bulb"/></svg><svg><use href="#sun"/></svg><svg><use href="#vpsun"/></svg><svg><use href="#lock"/></svg><i class="swatch"></i></span><i class="arr"></i></div>
    <button aria-label="置为当前"><svg><use href="#laycur"/></svg></button><button aria-label="上一个图层"><svg><use href="#layprev"/></svg></button>
  </div>
  <i class="grip far"></i>
  <div class="panel tail">
    <div class="combo color"><select aria-label="颜色"><option>ByLayer</option></select><span class="deco"><i class="swatch"></i></span><i class="arr"></i></div><hr class="wide">
    <div class="combo ltype"><select aria-label="线型"><option>ByLayer</option></select><span class="deco"><i class="rule"></i></span><i class="arr"></i></div><hr>
    <div class="combo lweight"><select aria-label="线宽"><option>ByLayer</option></select><span class="deco"><i class="rule short"></i></span><i class="arr"></i></div>
  </div>
</div>

<main class="work">
  <div class="dock first"><div class="tools"><i class="hgrip"></i>
    <button aria-label="长方体"><svg><use href="#box"/></svg></button><button aria-label="球体"><svg><use href="#sphere"/></svg></button><button aria-label="圆柱体"><svg><use href="#cyl"/></svg></button><button aria-label="圆锥体"><svg><use href="#cone"/></svg></button><button aria-label="楔体"><svg><use href="#wedge"/></svg></button><button aria-label="圆环体"><svg><use href="#torus"/></svg></button><hr>
    <button aria-label="拉伸"><svg><use href="#extrude"/></svg></button><button aria-label="旋转"><svg><use href="#revolve"/></svg></button><hr>
    <button aria-label="剖切"><svg><use href="#slice"/></svg></button><button aria-label="切割"><svg><use href="#section"/></svg></button><button aria-label="干涉"><svg><use href="#interf"/></svg></button><hr>
    <button aria-label="设置图形"><svg><use href="#sketchedit"/></svg></button><button aria-label="设置视图"><svg><use href="#setup"/></svg></button><button aria-label="设置轮廓"><svg><use href="#setprof"/></svg></button>
  </div></div>
  <div class="dock"><div class="tools"><i class="hgrip"></i>
    <button aria-label="并集"><svg><use href="#union"/></svg></button><button aria-label="差集"><svg><use href="#subtract"/></svg></button><button aria-label="交集"><svg><use href="#intersect"/></svg></button><hr>
    <button aria-label="拉伸面"><svg><use href="#extrude"/></svg></button><button aria-label="移动面"><svg><use href="#moveface"/></svg></button><button aria-label="偏移面"><svg><use href="#offset"/></svg></button><button aria-label="删除面"><svg><use href="#delface"/></svg></button><button aria-label="旋转面"><svg><use href="#rotface"/></svg></button><button aria-label="倾斜面"><svg><use href="#taper"/></svg></button><button aria-label="复制面"><svg><use href="#copyface"/></svg></button><button aria-label="着色面"><svg><use href="#colorface"/></svg></button><hr>
    <button aria-label="复制边"><svg><use href="#copyedge"/></svg></button><button aria-label="着色边"><svg><use href="#coloredge"/></svg></button><hr>
    <button aria-label="压印"><svg><use href="#imprint"/></svg></button><button aria-label="清除"><svg><use href="#clean"/></svg></button><button aria-label="分割"><svg><use href="#separate"/></svg></button><button aria-label="抽壳"><svg><use href="#shell"/></svg></button><button aria-label="检查"><svg><use href="#check"/></svg></button>
  </div></div>
  <div class="dock"><div class="tools"><i class="hgrip"></i>
    <button aria-label="命名视图"><svg><use href="#namedview"/></svg></button><hr>
    <button aria-label="俯视"><svg><use href="#vtop"/></svg></button><button aria-label="仰视"><svg><use href="#vbot"/></svg></button><button aria-label="左视"><svg><use href="#vleft"/></svg></button><button aria-label="右视"><svg><use href="#vright"/></svg></button><button aria-label="主视"><svg><use href="#vfront"/></svg></button><button aria-label="后视"><svg><use href="#vback"/></svg></button><hr>
    <button aria-label="西南等轴测"><svg><use href="#isw"/></svg></button><button aria-label="东南等轴测"><svg><use href="#ise"/></svg></button><button aria-label="东北等轴测"><svg><use href="#ine"/></svg></button><button aria-label="西北等轴测"><svg><use href="#inw"/></svg></button><hr>
    <button aria-label="相机"><svg><use href="#camera"/></svg></button></div>
    <div class="tools"><i class="hgrip"></i>
    <button aria-label="二维线框"><svg><use href="#s2d"/></svg></button><button aria-label="三维线框"><svg><use href="#s3d"/></svg></button><button aria-label="消隐"><svg><use href="#shid"/></svg></button><button aria-label="平面着色"><svg><use href="#sflat"/></svg></button><button aria-label="体着色"><svg><use href="#sgou"/></svg></button><button aria-label="带边框着色"><svg><use href="#sedge"/></svg></button>
  </div></div>

  <section class="doc">
    <div class="canvas">
      <svg class="drawing" viewBox="81 79 646 421" fill="none" stroke="#fff">
        <path d="M233 309V206"/>
        <path d="M233 206L332 151C329 205 292 283 233 309" stroke="#ff0"/>
        <path d="M297 347L398 289Q414 282 431 289L573 372Q588 381 577 391L475 449L297 347"/>
        <path d="M316 356L350 337C377 346 377 368 347 369Q338 369 332 366" stroke="#ff0"/>
        <path d="M461 439L493 418L478 410C460 402 438 410 438 422C438 431 446 434 461 439" stroke="#ff0"/>
        <ellipse cx="345" cy="353" rx="8" ry="5" stroke="#ff0"/>
        <ellipse cx="463" cy="422" rx="8" ry="5" stroke="#ff0"/>
        <path d="M105 196l48 28M105 224l48-28M125 207h8v6h-8z"/>
        <path d="M94 419v40l36 20M94 459l36-19M89 459l5-3 6 3-6 4zM120 441l10-1-5 6zM121 476l9 3-3-7zM120 442l4-4 2 4M120 476l3 5 4-1"/>
        <path d="M90 402h8l-8 10h8M138 428l4 5 4-5M142 433v5M137 482l8 10M145 482l-8 10" stroke="#ddd"/>
      </svg>
      <div class="balloon">在俯视图和右视图上<br>绘制如图所示面域</div>
    </div>
    <div class="vscroll"><button class="sb up" aria-label="向上"></button><i class="thumb"></i><button class="sb down" aria-label="向下"></button></div>
    <div class="tabs">
      <button class="nav" aria-label="第一个"><svg viewBox="0 0 16 14"><path d="M4 3v8M12 3v8L6 7z" stroke="#000"/></svg></button><button class="nav" aria-label="前一个"><svg viewBox="0 0 16 14"><path d="M10 3v8L5 7z"/></svg></button><button class="nav" aria-label="后一个"><svg viewBox="0 0 16 14"><path d="M6 3v8l5-4z"/></svg></button><button class="nav" aria-label="最后一个"><svg viewBox="0 0 16 14"><path d="M12 3v8M4 3v8l6-4z" stroke="#000"/></svg></button>
      <button class="tab on"><svg viewBox="0 0 46 16" preserveAspectRatio="none"><path d="M1 0L6 14H39L45 0z" fill="#000" stroke="#000"/></svg><span>模型</span></button><button class="tab"><svg viewBox="0 0 46 16" preserveAspectRatio="none"><path d="M1 0L6 14H39L45 0" fill="#f2f2f4" stroke="#000"/></svg><span>布局1</span></button><button class="tab"><svg viewBox="0 0 46 16" preserveAspectRatio="none"><path d="M1 0L6 14H39L45 0" fill="#f2f2f4" stroke="#000"/></svg><span>布局2</span></button>
    </div>
    <div class="hscroll"><button class="sb left" aria-label="向左"></button><i class="thumb"></i><button class="sb right" aria-label="向右"></button></div>
  </section>

  <div class="dock"><div class="tools"><i class="hgrip"></i>
    <button aria-label="线性标注"><svg><use href="#dlin"/></svg></button><button aria-label="对齐标注"><svg><use href="#dali"/></svg></button><button aria-label="坐标标注"><svg><use href="#dord"/></svg></button><hr>
    <button aria-label="半径标注"><svg><use href="#drad"/></svg></button><button aria-label="直径标注"><svg><use href="#ddia"/></svg></button><button aria-label="角度标注"><svg><use href="#dang"/></svg></button><hr>
    <button aria-label="快速标注"><svg><use href="#dquick"/></svg></button><button aria-label="基线标注"><svg><use href="#dbase"/></svg></button><button aria-label="连续标注"><svg><use href="#dcont"/></svg></button><hr>
    <button aria-label="快速引线"><svg><use href="#dlead"/></svg></button><button aria-label="公差"><svg><use href="#dtol"/></svg></button><button aria-label="圆心标记"><svg><use href="#dcen"/></svg></button><hr>
    <button aria-label="编辑标注"><svg><use href="#dedit"/></svg></button><button aria-label="编辑标注文字"><svg><use href="#dtext"/></svg></button><button aria-label="标注编辑"><svg><use href="#dpen"/></svg></button><button aria-label="标注更新"><svg><use href="#dupd"/></svg></button><hr>
    <button aria-label="标注样式管理"><svg><use href="#dstyle"/></svg></button></div>
    <div class="tools"><i class="hgrip"></i><button aria-label="文字"><svg><use href="#tstyle"/></svg></button></div>
  </div>
  <div class="dock last"><div class="tools"><i class="hgrip"></i>
    <button aria-label="镜像"><svg><use href="#rmir"/></svg></button><button aria-label="旋转复制"><svg><use href="#rrot"/></svg></button><button aria-label="修剪"><svg><use href="#rtrim"/></svg></button><button aria-label="延伸"><svg><use href="#rext"/></svg></button><button aria-label="多段线编辑"><svg><use href="#rpoly"/></svg></button><button aria-label="文字遮罩"><svg><use href="#rabcd"/></svg></button><button aria-label="图像剪裁"><svg><use href="#rimg1"/></svg></button><button aria-label="图像"><svg><use href="#rimg2"/></svg></button><button aria-label="网络"><svg><use href="#rglobe"/></svg></button><button aria-label="折断线"><svg><use href="#rbreak"/></svg></button><button aria-label="快速选择"><svg><use href="#rsel"/></svg></button><button aria-label="移动复制旋转"><svg><use href="#rmo"/></svg></button></div>
    <div class="tools"><i class="hgrip"></i>
    <button aria-label="图层管理"><svg><use href="#ly1"/></svg></button><button aria-label="图层匹配"><svg><use href="#ly2"/></svg></button><button aria-label="改为当前层"><svg><use href="#ly3"/></svg></button><button aria-label="图层隔离"><svg><use href="#ly4"/></svg></button><button aria-label="图层恢复"><svg><use href="#ly5"/></svg></button><button aria-label="图层冻结"><svg><use href="#ly6"/></svg></button><button aria-label="图层漫游"><svg><use href="#ly7"/></svg></button>
  </div></div>
</main>

<section class="command">
  <i class="grip"></i>
  <div class="cmdbox">
    <div class="history"><p>命令： *取消*</p><p>命令： *取消*</p></div>
    <label class="prompt">命令：<input type="text"></label>
  </div>
  <div class="cmdscroll"><button class="sb up" aria-label="向上滚动"></button><button class="sb down" aria-label="向下滚动"></button></div>
</section>

<footer class="status">
  <div class="coords">230.3944, 303.9402, 0.0000</div>
  <div class="modes"><i></i><i></i><i></i><i></i><i></i></div>
  <div class="player">
    <label class="seek"><input type="range" min="0" max="100" value="8" aria-label="进度"></label>
    <div class="controls">
      <button aria-label="开头"><svg viewBox="0 0 20 12"><path d="M5 1h2v10H5zM15 1v10L8 6z"/></svg></button><button aria-label="后退"><svg viewBox="0 0 20 12"><path d="M10 1v10L2 6zM18 1v10l-8-5z"/></svg></button><button aria-label="播放"><svg viewBox="0 0 20 12"><path d="M6 1v10l9-5z"/></svg></button><button aria-label="暂停"><svg viewBox="0 0 20 12"><path d="M6 2h3v8H6zM11 2h3v8h-3z"/></svg></button><button aria-label="快进"><svg viewBox="0 0 20 12"><path d="M2 1v10l8-5zM10 1v10l8-5z"/></svg></button><button aria-label="结尾"><svg viewBox="0 0 20 12"><path d="M5 1v10l7-5zM13 1h2v10h-2z"/></svg></button>
    </div>
    <button class="info">i</button>
  </div>
</footer>
<div class="mark"><span>微信号：</span><b>CADSKILL</b></div>
</body>
</html>
```
FILE: styles.css
```css
* { box-sizing: border-box; }
body {
  margin: 0;
  height: 100vh;
  display: flex;
  flex-direction: column;
  position: relative;
  overflow: hidden;
  background: #e0dfe5;
  border: 1px solid #77778c;
  border-bottom: 0;
  font: 12px "Liberation Serif", "Noto Sans CJK SC", serif;
  color: #000;
}
button { border: 0; padding: 0; margin: 0; background: none; font: inherit; color: inherit; }
svg { display: block; }
hr { border: 0; margin: 0; }
.sprite { position: absolute; width: 0; height: 0; }

.menubar { display: flex; height: 21px; flex: none; align-items: center; background: linear-gradient(#dcdce8, #e4e4ec); }
.appicon { width: 18px; height: 18px; margin-left: 4px; }
.menus { display: flex; gap: 16px; margin-left: 7px; padding-bottom: 4px; flex: 1; font: 15px/20px "Noto Sans CJK SC", sans-serif; white-space: nowrap; }
.winbtns { display: flex; gap: 3px; padding-right: 2px; }
.winbtns button { width: 17px; height: 17px; border: 1px solid; border-color: #f6f6ea #b8b8ba #b8b8ba #f6f6ea; background: #e3e3e2; }
.winbtns svg { width: 14px; height: 14px; }

.toolrow { display: flex; flex: none; height: 27px; padding: 3px 0 2px 3px; border-bottom: 1px solid #9a9aa4; overflow: hidden; }
.toolrow + .toolrow { height: 28px; }
.grip { flex: none; width: 7px; margin-right: 3px; border: solid #a9a9b4; border-width: 0 1px; background: linear-gradient(90deg, #fff 1px, #d9d9e0 1px, #b2b2bc 3px, #fff 3px); }
.grip.mid { margin: 0 2px 0 4px; }
.grip.far { margin: 0 3px 0 8px; }
.panel { display: flex; align-items: center; flex: none; background: #f5f5f7; border-right: 1px solid #a5a5b0; }
.panel.std { width: 526px; }
.panel.tail { flex: 1; min-width: 0; overflow: hidden; border-right: 0; }
.panel.layerbar { width: 369px; }
.panel > button { flex: none; width: 23px; height: 21px; display: grid; place-items: center; }
.panel > button svg { width: 18px; height: 18px; }
.panel > button.drop { width: 13px; }
.panel > button.drop svg { width: 10px; height: 10px; }
.panel hr { flex: none; width: 1px; height: 18px; margin: 0 3px 0 2px; background: #8fa6bd; }
.panel hr.wide { margin: 0 3px; }

.combo { position: relative; flex: none; height: 23px; border: 1px solid #6b93b3; background: #f7f7f8; }
.c100 { width: 100px; }
.layer { width: 299px; }
.color { width: 149px; }
.ltype { width: 160px; }
.lweight { width: 130px; }
select { appearance: none; display: block; width: 100%; height: 100%; border: 0; border-radius: 0; margin: 0; padding: 0 18px 0 3px; background: none; color: #000; font: 12px "Liberation Serif", serif; }
select.mono { font: 10px "DejaVu Sans Mono", monospace; }
select.cjk { font: 13px/18px "Noto Sans CJK SC", sans-serif; }
.layer select { padding-left: 85px; }
.color select { padding-left: 18px; }
.ltype select { padding-left: 68px; }
.lweight select { padding-left: 42px; }
.deco { position: absolute; left: 5px; top: 0; height: 21px; display: flex; align-items: center; gap: 2px; pointer-events: none; }
.deco svg { width: 14px; height: 16px; }
.swatch { width: 10px; height: 10px; border: 1px solid #000; }
.rule { width: 60px; height: 1px; background: #000; }
.rule.short { width: 34px; }
.arr { position: absolute; right: 0; top: 0; width: 15px; height: 100%; border: 1px solid #9a9aa6; background: linear-gradient(#fafafa, #cdcdd4); pointer-events: none; }
.arr::after, .sb::after { content: ""; position: absolute; left: 3px; top: 5px; width: 6px; height: 6px; border: solid #333; border-width: 0 2px 2px 0; transform: rotate(45deg); }

.work { flex: 1; min-height: 0; display: flex; }
.dock { flex: none; width: 26px; overflow: hidden; display: flex; flex-direction: column; }
.dock.first { width: 25px; }
.dock.last { width: 28px; padding-right: 2px; }
.tools { flex: none; display: flex; flex-direction: column; align-items: center; padding-bottom: 5px; background: #f5f5f7; border: solid #a5a5b0; border-width: 0 1px 1px 0; }
.hgrip { width: 100%; height: 11px; background: #e0dfe5; border-bottom: 1px solid #c3c3cb; padding: 2px; }
.tools + .tools .hgrip { height: 12px; }
.hgrip::before { content: ""; display: block; height: 7px; border: solid #a5a5b0; border-width: 1px 0; background: linear-gradient(#fff 1px, #dcdce3 1px, #dcdce3 2px, #a5a5b0 2px, #a5a5b0 3px, #fff 3px); }
.tools button { width: 22px; height: 22px; display: grid; place-items: center; }
.tools svg { width: 18px; height: 18px; }
.tools hr { width: 19px; height: 1px; margin: 2px 0 3px; background: #85858f; }

.doc { flex: 1; min-width: 0; display: grid; grid-template-columns: auto 1fr 16px; grid-template-rows: 1fr 16px; border: solid #85858f; border-width: 2px 2px 0 3px; border-right-color: #e0dfe5; }
.canvas { grid-column: 1 / 3; position: relative; background: #000; overflow: hidden; }
.drawing { width: 646px; height: 421px; shape-rendering: crispEdges; }
.balloon { position: absolute; left: 269px; top: 114px; width: 241px; height: 69px; padding-top: 13px; border-radius: 35px; text-align: center; font: 18px/20px "Noto Sans CJK SC", sans-serif; background: linear-gradient(165deg, #fff 15%, #dce7f6 45%, #bfd4ee 62%, #3f7fcb 95%); box-shadow: inset -6px -5px 10px #4a85cd, inset 6px 4px 10px #fff; border: 1px solid #d2e2f4; }
.vscroll { display: flex; flex-direction: column; background: #f1f1f4; padding: 0 0 0 1px; }
.vscroll .thumb { height: 16px; margin: 161px 0 auto; border: 1px solid #85858f; background: linear-gradient(90deg, #fff, #c5c5cf); }
.sb { position: relative; flex: none; width: 15px; height: 15px; border: 1px solid #85858f; background: linear-gradient(#fff, #cfcfd7); }
.sb::after { width: 6px; height: 6px; left: 4px; }
.sb.up::after { transform: rotate(225deg); top: 5px; }
.sb.down::after { top: 2px; }
.sb.left::after { transform: rotate(135deg); top: 4px; left: 5px; }
.sb.right::after { transform: rotate(315deg); top: 4px; left: 2px; }
.tabs { display: flex; background: #e0dfe5; }
.nav { width: 18px; height: 16px; border: 1px solid; border-color: #fff #9a9aa4 #9a9aa4 #fff; background: #efeff2; }
.nav svg { width: 16px; height: 14px; }
.tab { position: relative; width: 48px; height: 16px; margin-right: -3px; font: 12px/12px "Noto Sans CJK SC", sans-serif; }
.tab:nth-child(5) { margin-left: 3px; width: 43px; }
.tab svg { position: absolute; inset: 0; width: 100%; height: 100%; }
.tab span { position: relative; display: block; height: 16px; }
.tab.on { color: #fff; font-weight: bold; z-index: 1; }
.hscroll { grid-column: 2 / 4; display: flex; justify-self: end; width: 231px; padding-right: 17px; background: #f1f1f4; }
.hscroll .thumb { width: 15px; margin: 0 auto 0 62px; border: 1px solid #85858f; background: linear-gradient(#fff, #c5c5cf); }

.command { flex: none; height: 54px; display: flex; margin-top: 5px; padding: 4px 9px 1px 6px; border-top: 2px solid #111; background: #e0dfe5; font: 13px/14px "Liberation Mono", "Noto Sans CJK SC", monospace; }
.command .grip { margin: 4px 3px 3px 0; }
.cmdbox { flex: 1; min-width: 0; background: #f6f6f7; border: solid #222; border-width: 2px 0 0 1px; }
.cmdbox p { margin: 0; height: 14px; white-space: pre; }
.history { height: 29px; padding: 0 2px; border-bottom: 1px solid #999; }
.prompt { display: flex; height: 17px; padding: 2px; }
.prompt input { flex: 1; border: 0; padding: 0; background: none; font: inherit; outline: 0; }
.cmdscroll { width: 15px; padding-top: 1px; background: #f6f6f7; border-top: 1px solid #222; }
.cmdscroll .sb { display: block; height: 14px; }

.status { position: relative; flex: none; height: 24px; padding: 3px 0 0 5px; border-top: 1px solid #9a9aa4; background: linear-gradient(#dfe0e8, #d2d4e2); }
.coords { width: 250px; height: 18px; padding-left: 1px; border: 1px solid #a9a9b6; color: #9b9ca6; font: 10px/18px "Liberation Mono", monospace; white-space: pre; }
.player { position: absolute; left: 217px; top: 1px; width: 342px; height: 18px; display: flex; align-items: center; background: linear-gradient(#ededed, #fbfbfb 40%, #9d9d9d); border: 1px solid #aaa; }
.seek { width: 126px; height: 14px; margin-left: 7px; border: 1px solid #999; border-width: 0 2px; border-radius: 8px; background: #eee; }
.seek input { appearance: none; display: block; width: 112px; height: 14px; margin: 0 5px; background: linear-gradient(transparent 6px, #999 6px, #999 8px, transparent 8px); }
.seek input::-webkit-slider-thumb { appearance: none; width: 5px; height: 14px; background: #ddd; border: solid #222; border-width: 0 2px 0 1px; }
.controls { display: flex; gap: 4px; width: 164px; height: 14px; margin-left: 9px; padding-left: 10px; align-items: center; border: 1px solid #999; border-width: 0 2px; border-radius: 8px; background: linear-gradient(#eee, #ddd); }
.controls button { width: 20px; height: 12px; }
.controls svg { width: 20px; height: 12px; fill: #666; }
.info { width: 24px; height: 16px; margin-left: auto; border-left: 1px solid #aaa; font: bold 16px/15px "Liberation Serif", serif; color: #444; }
.modes { position: absolute; left: 356px; bottom: 2px; display: flex; gap: 4px; }
.modes i { width: 36px; height: 4px; background: repeating-linear-gradient(90deg, #222 0 4px, #eee 4px 6px, #444 6px 7px, #eee 7px 9px); }
.mark { position: absolute; right: -1px; bottom: 0; width: 187px; height: 39px; padding-left: 4px; display: flex; align-items: center; gap: 3px; background: #000; color: #e9e9e9; white-space: nowrap; overflow: hidden; font: 22px "Noto Sans CJK SC", sans-serif; }
.mark b { font: 19px "Liberation Mono", monospace; }
```
